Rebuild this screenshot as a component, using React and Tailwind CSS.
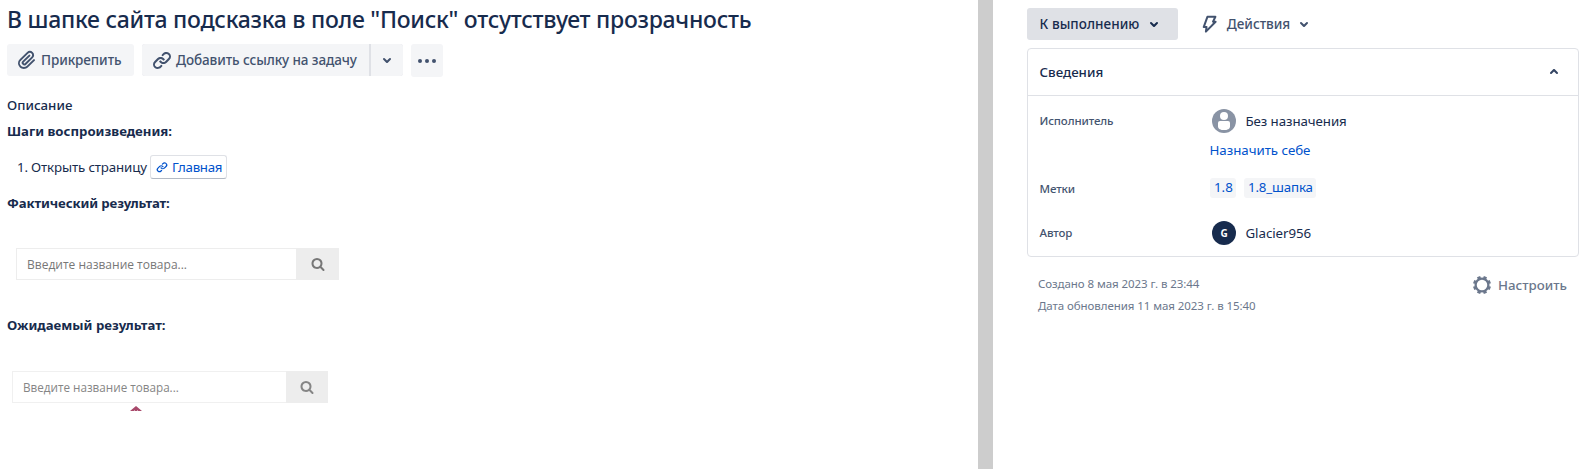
function Chevron({ up = false }) {
  return (
    <svg viewBox="0 0 24 24" className={up ? "size-6 rotate-180" : "size-6"} fill="currentColor">
      <path d="M8.292 10.293a1.009 1.009 0 000 1.419l2.939 2.965c.218.215.5.322.779.322s.556-.107.769-.322l2.93-2.955a1.01 1.01 0 000-1.419.987.987 0 00-1.406 0l-2.298 2.317-2.307-2.327a.99.99 0 00-1.406 0z" />
    </svg>
  );
}

function Attachment() {
  return (
    <svg viewBox="0 0 24 24" className="size-6 shrink-0" fill="currentColor">
      <path d="M11.643 17.965c-1.53 1.495-4.016 1.496-5.542.004a3.773 3.773 0 01.002-5.412l7.147-6.985a2.316 2.316 0 013.233-.003c.893.873.895 2.282.004 3.153l-6.703 6.55a.653.653 0 01-.914-.008.62.62 0 010-.902l6.229-6.087a.941.941 0 000-1.353.995.995 0 00-1.384 0l-6.23 6.087a2.502 2.502 0 000 3.607 2.643 2.643 0 003.683.009l6.703-6.55a4.074 4.074 0 00-.003-5.859 4.306 4.306 0 00-6.002.003l-7.148 6.985a5.655 5.655 0 00-.001 8.118c2.29 2.237 6.015 2.238 8.308-.004l6.682-6.53a.941.941 0 000-1.353.995.995 0 00-1.384 0l-6.68 6.53z" />
    </svg>
  );
}

function LinkIcon({ className }) {
  return (
    <svg viewBox="0 0 24 24" className={className} fill="currentColor">
      <path d="M12.856 5.457l-.937.92a1.002 1.002 0 000 1.437 1.047 1.047 0 001.463 0l.984-.966c.967-.95 2.542-1.135 3.602-.288a2.54 2.54 0 01.203 3.81l-2.903 2.852a2.646 2.646 0 01-3.696 0l-1.11-1.09L9 13.57l1.108 1.089c1.822 1.788 4.802 1.788 6.622 0l2.905-2.852a4.558 4.558 0 00-.357-6.82c-1.893-1.517-4.695-1.226-6.422.47" />
      <path d="M11.144 19.543l.937-.92a1.002 1.002 0 000-1.437 1.047 1.047 0 00-1.462 0l-.985.966c-.967.95-2.542 1.135-3.602.288a2.54 2.54 0 01-.203-3.81l2.903-2.852a2.646 2.646 0 013.696 0l1.11 1.09L15 11.43l-1.108-1.089c-1.822-1.788-4.802-1.788-6.622 0l-2.905 2.852a4.558 4.558 0 00.357 6.82c1.893 1.517 4.695 1.226 6.422-.47" />
    </svg>
  );
}

function SearchIcon() {
  return (
    <svg viewBox="0 0 1792 1792" className="size-[14px]" fill="currentColor">
      <path d="M1216 832q0-185-131.5-316.5t-316.5-131.5-316.5 131.5-131.5 316.5 131.5 316.5 316.5 131.5 316.5-131.5 131.5-316.5zm512 832q0 52-38 90t-90 38q-54 0-90-38l-343-342q-179 124-399 124-143 0-273.5-55.5t-225-150-150-225-55.5-273.5 55.5-273.5 150-225 225-150 273.5-55.5 273.5 55.5 225 150 150 225 55.5 273.5q0 220-124 399l343 343q37 37 37 90z" />
    </svg>
  );
}

function Bolt() {
  return (
    <svg viewBox="0 0 24 24" className="size-6 shrink-0" fill="none" stroke="currentColor" strokeWidth="2" strokeLinejoin="round">
      <path d="M9.4 4.8h8l-2.4 4.9h2.6L7.9 19.6l.6-4.5H5.7z" />
    </svg>
  );
}

function Gear() {
  return (
    <svg viewBox="0 0 24 24" className="size-6 shrink-0" fill="none" stroke="currentColor">
      <circle cx="12" cy="12" r="6.4" strokeWidth="2.3" />
      <g strokeWidth="3.4">
        {[22.5, 67.5, 112.5, 157.5, 202.5, 247.5, 292.5, 337.5].map((a) => (
          <path key={a} d="M12 3v2.6" transform={`rotate(${a} 12 12)`} />
        ))}
      </g>
    </svg>
  );
}

function Person() {
  return (
    <svg viewBox="0 0 24 24" className="size-6 shrink-0">
      <circle cx="12" cy="12" r="12" fill="#8993a4" />
      <circle cx="12" cy="7" r="4" fill="#fff" />
      <path d="M8 12h8a2 2 0 012 2v3.4c0 2.4-2.6 3.6-6 3.6s-6-1.2-6-3.6V14a2 2 0 012-2z" fill="#fff" />
    </svg>
  );
}

function Heading({ className, children }) {
  return (
    <h3 className={`h-5 text-[13.2px] leading-5 font-bold whitespace-nowrap ${className}`}>{children}</h3>
  );
}

function Row({ label, className, children }) {
  return (
    <div className={`flex items-center ${className}`}>
      <div className="w-[170px] shrink-0 text-[11.5px] leading-5 font-medium tracking-[-0.12px] text-[#44546f]">{label}</div>
      {children}
    </div>
  );
}

function Main() {
  return (
    <main className="w-[978px] shrink-0 pl-[7px]">
      <h1 className="mb-1.5 h-[38px] text-[23px] leading-[39px] font-medium tracking-[-0.26px] whitespace-nowrap">
        В шапке сайта подсказка в поле "Поиск" отсутствует прозрачность
      </h1>
      <div className="flex h-[33px] items-start gap-2 text-[13.5px] font-medium whitespace-nowrap text-[#42526e]">
        <button className="flex h-8 w-[127px] items-center gap-0.5 rounded-[3px] bg-[#f4f5f7] pl-2">
          <Attachment />
          <span className="tracking-[-0.08px]">Прикрепить</span>
        </button>
        <div className="flex h-8 gap-0.5 overflow-hidden rounded-[3px] bg-[#dfe1e6]">
          <button className="flex w-[227px] items-center gap-0.5 bg-[#f4f5f7] pl-2">
            <LinkIcon className="size-6 shrink-0" />
            <span className="tracking-[-0.1px]">Добавить ссылку на задачу</span>
          </button>
          <button className="flex w-8 items-center justify-center bg-[#f4f5f7]">
            <Chevron />
          </button>
        </div>
        <button className="flex h-[33px] w-8 items-center justify-center gap-[3px] rounded-[3px] bg-[#f4f5f7]">
          <span className="size-1 rounded-full bg-[#42526e]" />
          <span className="size-1 rounded-full bg-[#42526e]" />
          <span className="size-1 rounded-full bg-[#42526e]" />
        </button>
      </div>
      <h2 className="mt-[18px] h-5 text-[13.3px] leading-5 font-medium">Описание</h2>
      <Heading className="mt-1.5">Шаги воспроизведения:</Heading>
      <div className="mt-3.5 flex h-6 items-center pl-2.5 text-[13.3px] whitespace-nowrap">
        <span className="w-[14px] pt-px">1.</span>
        <span className="w-[119px] pt-px tracking-[-0.13px]">Открыть страницу</span>
        <a className="flex h-6 w-[77px] items-center rounded-[3px] border border-[#dfe1e6] border-b-[#b3bac5] pl-1 text-[#0052cc]">
          <LinkIcon className="mr-[3px] size-[14px]" />
          <span className="pt-px tracking-[-0.3px]">Главная</span>
        </a>
      </div>
      <Heading className="mt-3.5 tracking-[-0.12px]">Фактический результат:</Heading>
      <div className="mt-[35px] ml-[9px] flex h-8 w-[323px] font-['Open_Sans',sans-serif] text-[12px] text-[#777]">
        <div className="flex grow items-center border border-r-0 border-[#ededed] pt-0.5 pl-2.5">Введите название товара...</div>
        <div className="flex w-[43px] items-center justify-center bg-[#ededed]">
          <SearchIcon />
        </div>
      </div>
      <Heading className="mt-[35px]">Ожидаемый результат:</Heading>
      <div className="mt-9 ml-[5px] flex h-8 w-[316px] font-['Open_Sans',sans-serif] text-[11.7px] text-[#858585]">
        <div className="flex grow items-center border border-r-0 border-[#f0f0f0] pt-0.5 pl-2.5">Введите название товара...</div>
        <div className="flex w-[42px] items-center justify-center bg-[#ededed]">
          <SearchIcon />
        </div>
      </div>
      <svg viewBox="0 0 12 5" className="mt-[3px] ml-[122.5px] h-[5px] w-3" fill="#a8496b">
        <path d="M6 0L12 5H8.2L7.2 4V5H4.8V4L3.8 5H0z" />
      </svg>
    </main>
  );
}

function Sidebar() {
  return (
    <aside className="grow pt-2 pr-[9px] pl-[34px] text-[13.3px] whitespace-nowrap">
      <div className="flex h-8 items-center text-[13.5px] font-medium">
        <button className="flex h-8 w-[151px] items-center rounded-[3px] bg-[#dfe1e6] pl-2.5">
          <span className="w-[105px] pt-px tracking-[0.05px]">К выполнению</span>
          <Chevron />
        </button>
        <button className="ml-5 flex h-8 items-center text-[#42526e]">
          <Bolt />
          <span className="ml-[3px] w-[67px] pt-px tracking-[-0.05px]">Действия</span>
          <Chevron />
        </button>
      </div>
      <section className="mt-2 h-[209px] rounded-[4px] border border-[#dfe1e6]">
        <header className="flex h-[47px] items-center justify-between border-b border-[#dfe1e6] pr-3 pl-[11.5px] font-medium">
          <span className="pt-0.5">Сведения</span>
          <span className="text-[#344563]">
            <Chevron up />
          </span>
        </header>
        <div className="pt-[13px] pl-[11.5px]">
          <Row label="Исполнитель" className="h-6">
            <div className="flex items-center gap-[9.5px] pl-[2.5px]">
              <Person />
              <span className="pt-0.5 tracking-[-0.08px]">Без назначения</span>
            </div>
          </Row>
          <a className="mt-[7px] ml-[170px] block h-5 leading-5 tracking-[-0.03px] text-[#0052cc]">Назначить себе</a>
          <div className="mt-[18px] flex h-5 items-start">
            <div className="w-[170.5px] pt-px text-[11.5px] leading-5 font-medium tracking-[-0.12px] text-[#44546f]">Метки</div>
            <div className="flex gap-2 leading-[18px] text-[#0052cc]">
              <a className="h-5 w-[26px] rounded-[3px] bg-[#f4f5f7] pl-1">1.8</a>
              <a className="h-5 w-[72px] rounded-[3px] bg-[#f4f5f7] pl-1 tracking-[-0.15px]">1.8_шапка</a>
            </div>
          </div>
          <Row label="Автор" className="mt-[23px] h-6">
            <div className="flex items-center gap-[9.5px] pl-[2.5px]">
              <span className="flex size-6 items-center justify-center rounded-full bg-[#172b4d] text-[10px] font-bold text-white">G</span>
              <span className="pt-0.5 tracking-[-0.06px]">Glacier956</span>
            </div>
          </Row>
        </div>
      </section>
      <footer className="mt-4 flex items-start justify-between pr-3 pl-[11px]">
        <div className="text-[11.5px] leading-[22px] tracking-[-0.07px] text-[#6b778c]">
          <p>Создано 8 мая 2023 г. в 23:44</p>
          <p>Дата обновления 11 мая 2023 г. в 15:40</p>
        </div>
        <button className="flex h-6 items-center gap-1 font-medium text-[#6b778c]">
          <Gear />
          <span className="pt-0.5">Настроить</span>
        </button>
      </footer>
    </aside>
  );
}

export default function App() {
  return (
    <div className="flex h-[469px] w-[1588px] overflow-hidden bg-white font-['Noto_Sans','Open_Sans',sans-serif] text-[#172b4d]">
      <Main />
      <div className="w-[15px] shrink-0 bg-[#cdcdcd]" />
      <Sidebar />
    </div>
  );
}
